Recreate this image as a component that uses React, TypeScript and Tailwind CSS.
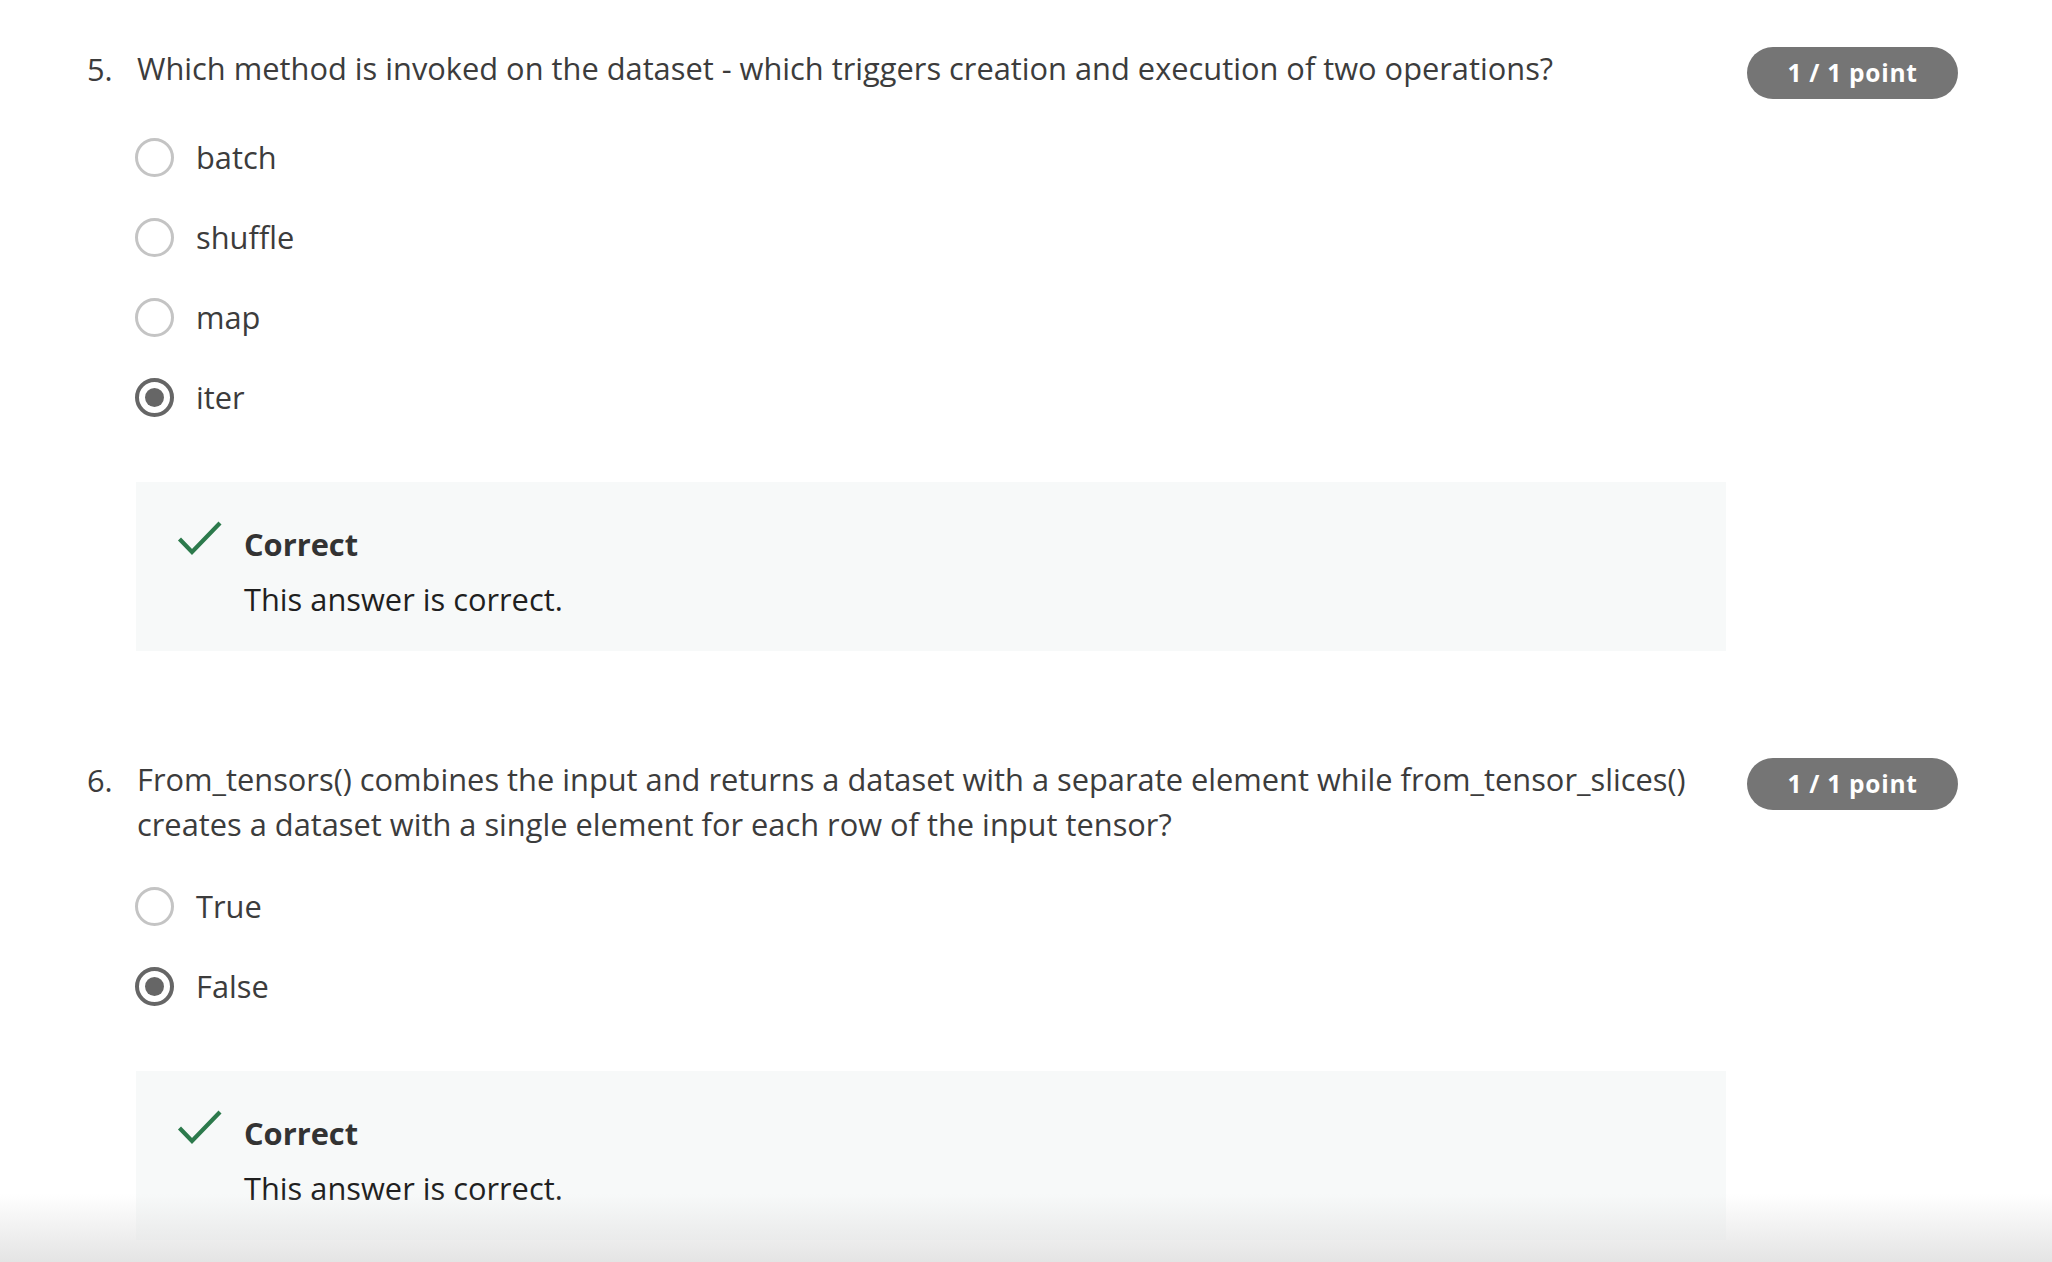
import React from "react";

function Radio({ checked }: { checked: boolean }) {
  if (checked) {
    return (
      <span className="flex h-[39px] w-[39px] shrink-0 items-center justify-center rounded-full border-[4px] border-[#666666]">
        <span className="h-[19px] w-[19px] rounded-full bg-[#666666]" />
      </span>
    );
  }
  return <span className="h-[39px] w-[39px] shrink-0 rounded-full border-[3px] border-[#c4c4c4]" />;
}

function Check() {
  return (
    <svg width="46" height="36" viewBox="0 0 46 36" className="mt-[-1px] shrink-0">
      <polyline points="2.5,19 15,32 43,3" fill="none" stroke="#2c7a4c" strokeWidth="4.2" />
    </svg>
  );
}

function Feedback() {
  return (
    <div className="mt-[45px] -ml-[1px] w-[1590px] bg-[#f7f9f9] pt-[39px] pb-[29px] pl-[41px]">
      <div className="flex gap-[21px]">
        <Check />
        <div>
          <div className="text-[30.8px] font-bold leading-[46px] text-[#333333]">Correct</div>
          <div className="mt-[9px] text-[30.8px] leading-[46px] text-[#1f1f1f]">This answer is correct.</div>
        </div>
      </div>
    </div>
  );
}

function Badge() {
  return (
    <div className="ml-[20px] mt-[1px] flex h-[52px] w-[211px] shrink-0 items-center justify-center rounded-full bg-[#757575] pt-[1px] text-[24.5px] font-bold tracking-[0.03em] text-white">
      1 / 1 point
    </div>
  );
}

function Question({
  num,
  text,
  options,
  selected,
  optTop,
}: {
  num: string;
  text: string;
  options: string[];
  selected: number;
  optTop: string;
}) {
  return (
    <div className="flex items-start">
      <div className="flex w-[1640px]">
        <div className="w-[50px] shrink-0 text-[30.8px] leading-[46px] text-[#3c3c3c]">{num}</div>
        <div className="w-[1590px]">
          <p className="text-[30.8px] leading-[45px] text-[#3c3c3c]">{text}</p>
          <div className={`${optTop} -ml-[2px] flex flex-col`}>
            {options.map((o, i) => (
              <div key={o} className="flex h-[80px] items-center gap-[22px]">
                <Radio checked={i === selected} />
                <span className="text-[30.8px] text-[#3c3c3c]">{o}</span>
              </div>
            ))}
          </div>
          <Feedback />
        </div>
      </div>
      <Badge />
    </div>
  );
}

export default function App() {
  return (
    <div
      className="relative h-[1262px] w-full overflow-hidden bg-white pl-[87px] pt-[46px]"
      style={{ fontFamily: '"Open Sans", "Noto Sans", sans-serif' }}
    >
      <Question
        num="5."
        text="Which method is invoked on the dataset - which triggers creation and execution of two operations?"
        options={["batch", "shuffle", "map", "iter"]}
        selected={3}
        optTop="mt-[26px]"
      />
      <div className="h-[106px]" />
      <Question
        num="6."
        text="From_tensors() combines the input and returns a dataset with a separate element while from_tensor_slices() creates a dataset with a single element for each row of the input tensor?"
        options={["True", "False"]}
        selected={1}
        optTop="mt-[19px]"
      />
      <div className="pointer-events-none absolute bottom-0 left-0 h-[68px] w-full bg-linear-to-b from-white/0 to-[#e4e4e4]" />
    </div>
  );
}
